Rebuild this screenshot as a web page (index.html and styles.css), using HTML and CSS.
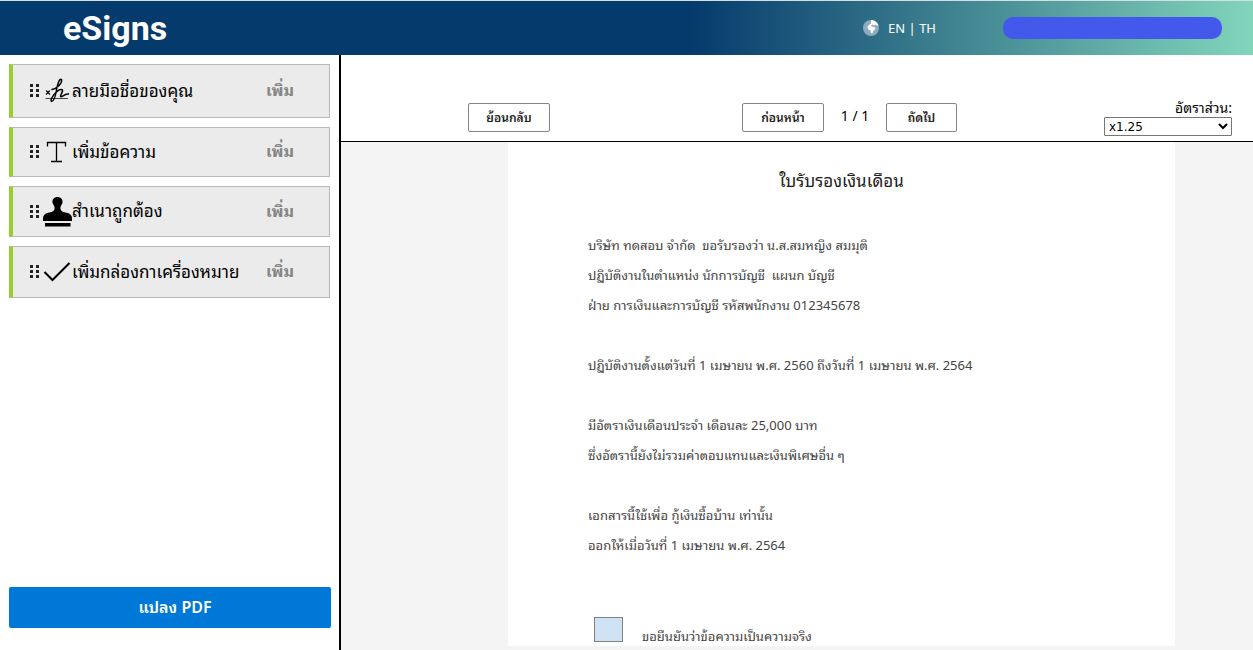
FILE: index.html
```html
<!DOCTYPE html>
<html lang="th">
<head>
<meta charset="utf-8">
<meta name="viewport" content="width=device-width, initial-scale=1">
<title>eSigns</title>
<link rel="stylesheet" href="styles.css">
</head>
<body>
<header class="topbar">
  <h1 class="brand">eSigns</h1>
  <nav class="lang">
    <svg class="globe" viewBox="0 0 16 16" aria-hidden="true">
      <circle cx="8" cy="8" r="8" fill="#8fabc0"/>
      <path d="M8 0C12 0 14.500 2.500 15.500 5.500L14 5.500 12.500 4.500 11.500 5.500 9.500 4.500 8 5.500 9 6.500 11 7 12.500 8 11.500 10 10 11 9.500 13.500 8 13 7.500 10.500 5 9 4.500 6.500 6 5 8 3.500Z" fill="#fff"/>
    </svg>
    <span><a href="#en">EN</a> | <a href="#th">TH</a></span>
  </nav>
  <div class="account"></div>
</header>
<div class="layout">
  <aside class="sidebar">
    <ul class="tools">
      <li class="tool tool-sign">
        <svg class="grip" viewBox="0 0 9 14" aria-hidden="true"><path d="M0 0h3v3H0zM6 0h3v3H6zM0 5h3v3H0zM6 5h3v3H6zM0 10h3v3H0zM6 10h3v3H6z"/></svg>
        <svg class="icon" viewBox="0 0 30 30" aria-hidden="true"><g fill="none" stroke="#000" stroke-linecap="round" stroke-linejoin="round"><path d="M3 22.500H24.500" stroke-width="1.200" stroke="#444"/><path d="M3.500 15l3 3M6.500 15l-3 3" stroke-width="1.300"/><path d="M9 13.500C14 12.500 19.500 7 18.500 3.500 16.500 2 14.500 8 13.500 14 12.500 20 11 25.500 8.500 25.500 7 24 10 19 14 15.500 17 13 20 13 19.500 15 19 17 17.500 19 17.500 20.500 19 22 21 17.500 25.500 18" stroke-width="1.500"/></g></svg>
        <span class="name">ลายมือชื่อของคุณ</span>
        <button class="add" type="button">เพิ่ม</button>
      </li>
      <li class="tool tool-text">
        <svg class="grip" viewBox="0 0 9 14" aria-hidden="true"><path d="M0 0h3v3H0zM6 0h3v3H6zM0 5h3v3H0zM6 5h3v3H6zM0 10h3v3H0zM6 10h3v3H6z"/></svg>
        <svg class="icon" viewBox="0 0 30 30" aria-hidden="true"><path d="M4.500 9.500V5.500H22.500V9.500M13.500 5.500V24.500M8 24.500H19" fill="none" stroke="#000" stroke-width="1.300"/></svg>
        <span class="name">เพิ่มข้อความ</span>
        <button class="add" type="button">เพิ่ม</button>
      </li>
      <li class="tool">
        <svg class="grip" viewBox="0 0 9 14" aria-hidden="true"><path d="M0 0h3v3H0zM6 0h3v3H6zM0 5h3v3H0zM6 5h3v3H6zM0 10h3v3H0zM6 10h3v3H6z"/></svg>
        <svg class="icon" viewBox="0 0 30 30" aria-hidden="true"><path d="M14.500 0C11 0 9 2.500 9.500 5.500 10 8 12 9 11.500 12 11 14.500 9 15 5 15.800 2 16.500 0 18.500 0 21V24H29V21C29 18.500 27 16.500 24 15.800 20 15 18 14.500 17.500 12 17 9 19 8 19.500 5.500 20 2.500 18 0 14.500 0ZM2 26H27.500V29.500H2Z"/></svg>
        <span class="name">สำเนาถูกต้อง</span>
        <button class="add" type="button">เพิ่ม</button>
      </li>
      <li class="tool tool-check">
        <svg class="grip" viewBox="0 0 9 14" aria-hidden="true"><path d="M0 0h3v3H0zM6 0h3v3H6zM0 5h3v3H0zM6 5h3v3H6zM0 10h3v3H0zM6 10h3v3H6z"/></svg>
        <svg class="icon" viewBox="0 0 30 30" aria-hidden="true"><path d="M1.500 15L9.500 23 26.500 6" fill="none" stroke="#000" stroke-width="2"/></svg>
        <span class="name">เพิ่มกล่องกาเครื่องหมาย</span>
        <button class="add" type="button">เพิ่ม</button>
      </li>
    </ul>
    <button class="convert" type="button">แปลง PDF</button>
  </aside>
  <main class="viewer">
    <div class="toolbar">
      <button class="btn back" type="button">ย้อนกลับ</button>
      <div class="pager">
        <button class="btn" type="button">ก่อนหน้า</button>
        <span class="count">1 / 1</span>
        <button class="btn btn-next" type="button">ถัดไป</button>
      </div>
      <div class="zoom">
        <label for="scale">อัตราส่วน:</label>
        <select id="scale"><option>x1.25</option></select>
      </div>
    </div>
    <div class="canvas">
      <article class="sheet">
        <h2 class="title">ใบรับรองเงินเดือน</h2>
        <p>บริษัท ทดสอบ จำกัด&nbsp; ขอรับรองว่า น.ส.สมหญิง สมมุติ<br>ปฏิบัติงานในตำแหน่ง นักการบัญชี&nbsp; แผนก บัญชี<br>ฝ่าย การเงินและการบัญชี รหัสพนักงาน 012345678</p>
        <p>ปฏิบัติงานตั้งแต่วันที่ 1 เมษายน พ.ศ. 2560 ถึงวันที่ 1 เมษายน พ.ศ. 2564</p>
        <p>มีอัตราเงินเดือนประจำ เดือนละ 25,000 บาท<br>ซึ่งอัตรานี้ยังไม่รวมค่าตอบแทนและเงินพิเศษอื่น ๆ</p>
        <p>เอกสารนี้ใช้เพื่อ กู้เงินซื้อบ้าน เท่านั้น<br>ออกให้เมื่อวันที่ 1 เมษายน พ.ศ. 2564</p>
        <div class="confirm">
          <input id="confirm" type="checkbox">
          <label for="confirm">ขอยืนยันว่าข้อความเป็นความจริง</label>
        </div>
      </article>
    </div>
  </main>
</div>
</body>
</html>
```
FILE: styles.css
```css
* { box-sizing: border-box; }
body {
  margin: 0;
  height: 100vh;
  display: flex;
  flex-direction: column;
  overflow: hidden;
  background: #fff;
  color: #000;
  font-family: "Noto Sans", "Noto Sans Thai Looped", "Noto Sans Thai", sans-serif;
  font-size: 14px;
}
button, select, input { font: inherit; margin: 0; }

.topbar {
  display: flex;
  align-items: center;
  flex: none;
  height: 55px;
  padding: 0 31px 0 63px;
  border-top: 1px solid #d5dfe2;
  background: linear-gradient(90deg, #053a6c 0 55%, #82d5bb 100%);
  color: #fff;
}
.brand {
  flex: 1;
  margin: 0;
  font: bold 34px/54px Roboto, sans-serif;
}
.lang { display: flex; align-items: center; gap: 9px; margin-right: 67px; font-size: 13px; line-height: 16px; }
.lang a { color: inherit; text-decoration: none; }
.globe { width: 16px; height: 16px; }
.account { width: 219px; height: 22px; border-radius: 10px; background: #4359ec; }

.layout { flex: 1; display: flex; min-height: 0; }
.sidebar {
  display: flex;
  flex-direction: column;
  justify-content: space-between;
  flex: none;
  width: 341px;
  padding: 9px 9px 22px;
  border-right: 2px solid #000;
}
.tools {
  display: grid;
  gap: 9px;
  margin: 0;
  padding: 0;
  list-style: none;
}
.tool {
  display: flex;
  align-items: center;
  width: 321px;
  height: 51px;
  padding: 0 35px 0 17px;
  border: 1px solid #b9b9b9;
  border-left: 4px solid #9acd32;
  background: #ebebeb;
  font-size: 17px;
}
.tool-sign { height: 54px; }
.tool-text { height: 50px; }
.tool-check { height: 52px; }
.grip { width: 9px; height: 14px; margin-right: 4px; fill: #222; }
.icon { width: 30px; height: 30px; margin-right: -1px; }
.name { flex: 1; padding-bottom: 4px; white-space: nowrap; }
.add {
  padding: 0 0 4px;
  border: 0;
  background: none;
  color: #858585;
  font-weight: bold;
  font-size: 16px;
}
.convert {
  height: 41px;
  width: 322px;
  padding: 0 0 3px 10px;
  border: 0;
  border-radius: 2px;
  background: #0078d7;
  color: #fff;
  font-size: 16px;
  font-weight: 600;
}

.viewer { flex: 1; display: flex; flex-direction: column; min-width: 0; }
.toolbar {
  display: flex;
  align-items: flex-end;
  justify-content: space-between;
  flex: none;
  height: 87px;
  padding: 0 21px 5px 127px;
  border-bottom: 1px solid #000;
}
.btn {
  width: 82px;
  height: 29px;
  padding: 0 0 3px;
  border: 1px solid #858585;
  border-radius: 2px;
  background: #fff;
  color: #222;
  font-size: 12px;
  font-weight: 600;
}
.btn-next { width: 71px; }
.back { margin-bottom: 4px; }
.pager { display: flex; align-items: center; margin: 0 0 4px 45px; }
.count { width: 62px; padding-bottom: 4px; text-align: center; }
.zoom { display: flex; flex-direction: column; align-items: flex-end; line-height: 18px; }
.zoom select {
  width: 128px;
  height: 19px;
  padding: 0;
  border: 1px solid #767676;
  border-radius: 1px;
  background: #fff;
  font: 12px "DejaVu Sans", sans-serif;
}

.canvas { flex: 1; min-height: 0; padding: 0 78px 4px 167px; background: #f4f4f4; }
.sheet {
  height: 100%;
  padding: 21px 80px 0;
  background: #fff;
  color: #444;
  font-size: 13px;
  line-height: 30px;
}
.title {
  margin: 0 0 31px;
  color: #222;
  font-size: 17px;
  font-weight: 400;
  line-height: 36px;
  text-align: center;
}
.sheet p { margin: 0 0 30px; white-space: nowrap; }
.confirm { display: flex; align-items: flex-start; gap: 19px; margin-top: 57px; padding-left: 6px; }
.confirm input {
  appearance: none;
  width: 29px;
  height: 25px;
  border: 1px solid #7c8288;
  background: #cfe2f3;
}
.confirm label { padding-top: 4px; }
```
